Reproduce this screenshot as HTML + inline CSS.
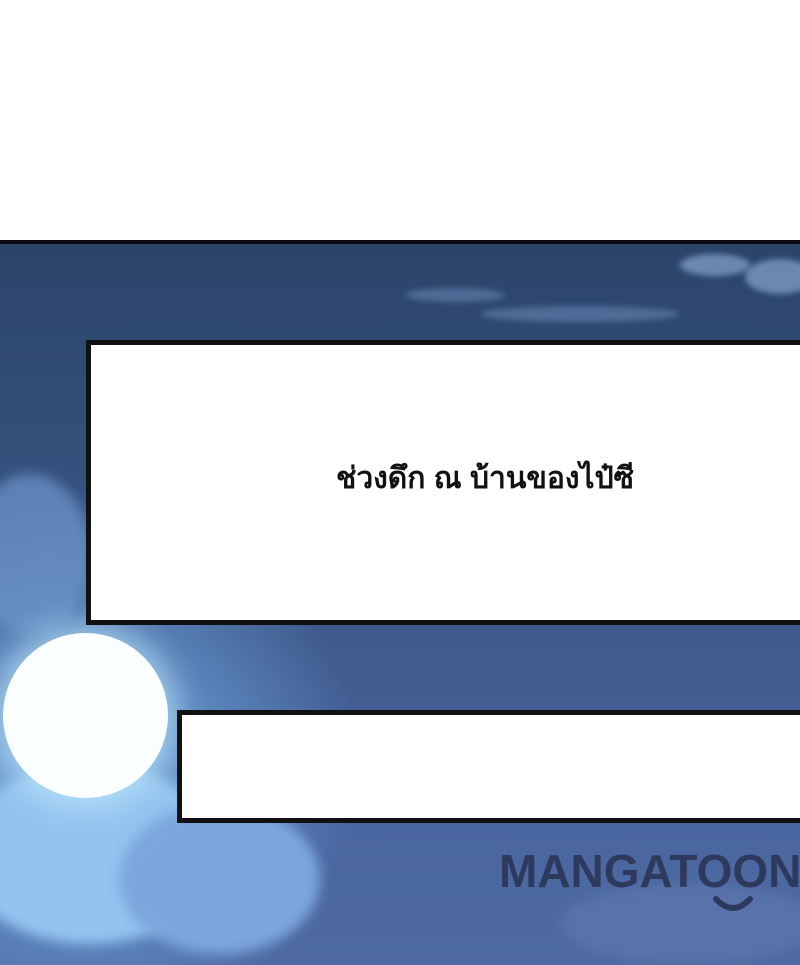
<!DOCTYPE html>
<html><head><meta charset="utf-8"><style>
html,body{margin:0;padding:0;overflow:hidden}
body{width:800px;height:965px;position:relative;overflow:hidden;background:#fff;font-family:"Liberation Sans",sans-serif}
.sky{position:absolute;left:0;top:240px;width:800px;height:725px;border-top:4px solid #0a0a10;box-sizing:border-box;
background:linear-gradient(180deg,#2b4469 0%,#34507c 30%,#3f5a8c 55%,#4a66a0 80%,#4f6aa2 100%);overflow:hidden}
.glow{position:absolute;left:-200px;top:240px;width:560px;height:560px;border-radius:50%;
background:radial-gradient(circle,rgba(150,210,255,.75) 0%,rgba(120,180,240,.45) 35%,rgba(90,140,210,0) 70%)}
.cloud{position:absolute;border-radius:50%;background:#8fbbe8;filter:blur(6px)}
.wisp{position:absolute;border-radius:50%;background:rgba(120,150,200,.45);filter:blur(3px)}
.moon{position:absolute;left:3px;top:633px;width:165px;height:165px;border-radius:50%;background:#fbfeff;box-shadow:0 0 30px 10px rgba(200,240,255,.6)}
.box{position:absolute;background:#fff;border:5px solid #111;box-sizing:border-box;border-right:none}
.t{position:absolute;left:185px;width:600px;top:459px;text-align:center;font-size:30px;font-weight:bold;color:#111;line-height:40px}
.logo{position:absolute;left:499px;top:846px;font-size:46px;font-weight:900;color:#2d3a5e;letter-spacing:0px;white-space:nowrap;line-height:50px}
</style></head><body>
<div class="sky">
 <div class="glow"></div>
 <div class="wisp" style="left:405px;top:44px;width:100px;height:14px"></div>
 <div class="wisp" style="left:480px;top:62px;width:200px;height:16px"></div>
 <div class="wisp" style="left:680px;top:10px;width:70px;height:22px;background:rgba(150,180,220,.6)"></div>
 <div class="wisp" style="left:745px;top:15px;width:70px;height:35px;background:rgba(150,180,220,.6)"></div>
 <div class="cloud" style="left:-40px;top:520px;width:260px;height:180px;background:#93c3ef"></div>
 <div class="cloud" style="left:120px;top:560px;width:200px;height:150px;background:#7aa6dc"></div>
 <div class="cloud" style="left:-30px;top:230px;width:120px;height:160px;background:#6f96cc;opacity:.7"></div>
 <div class="cloud" style="left:560px;top:640px;width:260px;height:80px;background:#5a76ad;opacity:.8"></div>
</div>
<div class="moon"></div>
<div class="box" style="left:86px;top:340px;width:714px;height:285px"></div>
<div class="box" style="left:177px;top:710px;width:623px;height:113px"></div>
<div class="t">ช่วงดึก ณ บ้านของไป๋ซี</div>
<div class="logo">MANGATOON</div>
<svg style="position:absolute;left:712px;top:895px" width="42" height="20"><path d="M4 4 Q21 22 38 4" stroke="#2d3a5e" stroke-width="6" fill="none" stroke-linecap="round"/></svg>
</body></html>
